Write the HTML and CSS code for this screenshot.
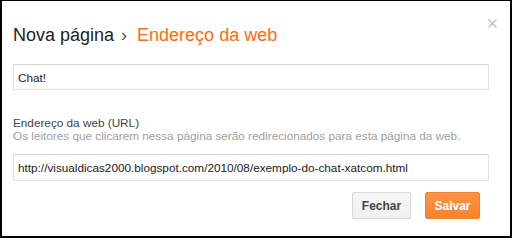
FILE: index.html
```html
<!DOCTYPE html>
<html lang="pt">
<head>
<meta charset="utf-8">
<title>Nova página</title>
<link rel="stylesheet" href="styles.css">
</head>
<body>
<div class="dialog">
  <div class="header">
    <h1 class="title"><span class="crumb">Nova página</span><span class="sep">›</span><span class="current">Endereço da web</span></h1>
    <svg class="close" width="9" height="9" viewBox="0 0 9 9" aria-label="Fechar"><path d="M0.5 0.5 L8.5 8.5 M8.5 0.5 L0.5 8.5" stroke="#b9b9b9" stroke-width="1.2" fill="none"/></svg>
  </div>
  <div class="body">
    <div class="field field-title">Chat!</div>
    <div class="label">Endereço da web (URL)</div>
    <div class="hint">Os leitores que clicarem nessa página serão redirecionados para esta página da web.</div>
    <div class="field field-url">http://visualdicas2000.blogspot.com/2010/08/exemplo-do-chat-xatcom.html</div>
    <div class="actions">
      <button class="btn btn-secondary">Fechar</button>
      <button class="btn btn-primary">Salvar</button>
    </div>
  </div>
</div>
</body>
</html>
```
FILE: styles.css
```css
* { box-sizing: border-box; }
html, body { margin: 0; padding: 0; background: #fff; }
body { font-family: Arial, "Liberation Sans", sans-serif; }

.dialog {
  width: 512px;
  height: 238px;
  background: #fff;
  border-style: solid;
  border-color: #000;
  border-width: 1px 2px 2px 2px;
  padding: 18px 13px 0 11px;
}

.header {
  display: flex;
  justify-content: space-between;
  align-items: flex-start;
}

.title {
  margin: 5px 0 0 0;
  font-size: 18px;
  line-height: 22px;
  font-weight: normal;
  color: #222;
  white-space: nowrap;
}
.sep { color: #555; margin: 0 10px 0 7px; }
.current { color: #ff6a13; }

.close { display: block; }

.body { margin-right: 8px; }

.field {
  border: 1px solid #e1e1e1;
  border-top-color: #d6d6d6;
  font-size: 11.75px;
  color: #222;
  padding: 0 4px;
  display: flex;
  align-items: center;
  white-space: nowrap;
  box-shadow: inset 0 1px 1px rgba(0,0,0,0.03);
}
.field-title { height: 26px; margin-top: 18px; }
.field-url { height: 27px; margin-top: 12px; }

.label {
  margin-top: 26px;
  font-size: 11.75px;
  line-height: 13px;
  color: #444;
}
.hint {
  font-size: 11.75px;
  line-height: 13px;
  color: #a0a0a0;
  white-space: nowrap;
}

.actions {
  display: flex;
  justify-content: flex-end;
  gap: 14px;
  margin-top: 11px;
  padding-right: 9px;
}

.btn {
  font-family: Arial, "Liberation Sans", sans-serif;
  font-size: 12px;
  font-weight: bold;
  height: 27px;
  border-radius: 2px;
  padding: 0;
  cursor: pointer;
}
.btn-secondary {
  width: 59px;
  color: #444;
  background: linear-gradient(#f6f6f6, #f0f0f0);
  border: 1px solid #d9d9d9;
}
.btn-primary {
  width: 55px;
  color: #fff;
  background: linear-gradient(#fc9443, #f7832d);
  border: 1px solid #f2812e;
}
```
